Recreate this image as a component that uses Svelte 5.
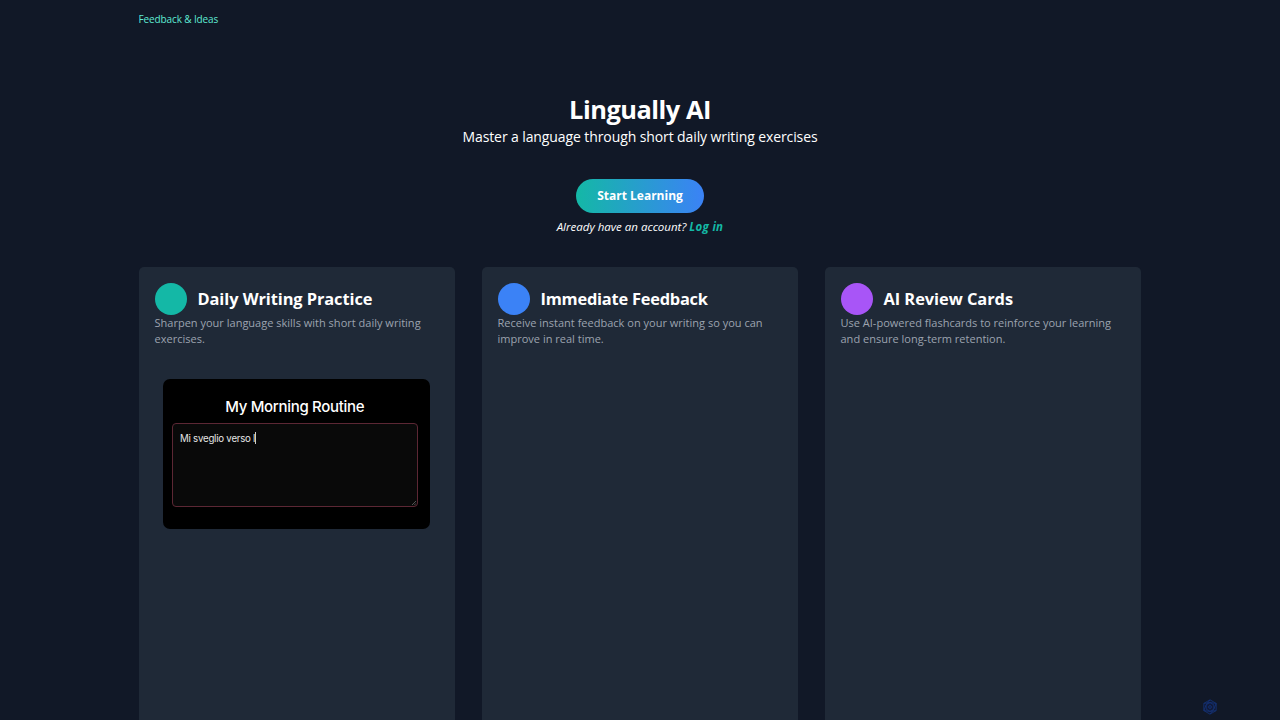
<script lang="ts">
  interface Feature {
    title: string;
    text: string;
    color: string;
    spacing: number;
    demo?: boolean;
  }

  const features: Feature[] = [
    {
      title: "Daily Writing Practice",
      text: "Sharpen your language skills with short daily writing exercises.",
      color: "#14b8a6",
      spacing: -0.08,
      demo: true,
    },
    {
      title: "Immediate Feedback",
      text: "Receive instant feedback on your writing so you can improve in real time.",
      color: "#3b82f6",
      spacing: -0.22,
    },
    {
      title: "AI Review Cards",
      text: "Use AI-powered flashcards to reinforce your learning and ensure long-term retention.",
      color: "#a855f7",
      spacing: -0.04,
    },
  ];
</script>

<div class="page">
  <nav><a class="feedback" href="#feedback">Feedback &amp; Ideas</a></nav>

  <header>
    <h1>Lingually AI</h1>
    <p class="tagline">Master a language through short daily writing exercises</p>
    <button type="button" class="start">Start Learning</button>
    <p class="login"><span>Already have an account?</span> <a href="#login">Log in</a></p>
  </header>

  <main>
    {#each features as feature}
      <section class="card">
        <div class="card-head">
          <span class="dot" style="background:{feature.color}"></span>
          <h2 style="letter-spacing:{feature.spacing}px">{feature.title}</h2>
        </div>
        <p class="card-text">{feature.text}</p>
        {#if feature.demo}
          <div class="demo">
            <h3>My Morning Routine</h3>
            <div class="editor">
              <span class="typed">Mi sveglio verso l</span><span class="caret"></span>
              <svg class="grip" viewBox="0 0 4 4"><path d="M0 4 4 0M2.4 4 4 2.4" /></svg>
            </div>
          </div>
        {/if}
      </section>
    {/each}
  </main>

  <svg class="badge" viewBox="0 0 16 16">
    <path d="M8 .8 14.2 4.4V11.6L8 15.2 1.8 11.6V4.4Z" />
    <path d="M8 3.6 11.8 5.8V10.2L8 12.4 4.2 10.2V5.8Z" />
    <path d="M8 .8 4.2 5.8 1.8 11.6M1.8 4.4 8 3.6 14.2 4.4M14.2 4.4 11.8 10.2 8 15.2M14.2 11.6 8 12.4 1.8 11.6" />
    <circle cx="8" cy="8" r="1.4" />
  </svg>
</div>

<style>
  :global(body) { background: #111827; overflow: hidden; }
  .page {
    height: 720px; display: flex; flex-direction: column; overflow: hidden; position: relative;
    background: #111827; color: #fff; font-family: "Open Sans", "Noto Sans", sans-serif;
  }
  h1, h2, h3, p { margin: 0; }
  a { text-decoration: none; }
  nav { height: 38px; padding-left: 138.5px; display: flex; align-items: center; flex: none; }
  .feedback { color: #5eead4; font-size: 10px; line-height: 16px; letter-spacing: -0.12px; }
  header {
    display: flex; flex-direction: column; align-items: center; flex: none;
    height: 228.5px; padding-top: 55px; box-sizing: border-box; white-space: nowrap;
  }
  h1 { font-size: 25.4px; font-weight: 700; line-height: 32px; letter-spacing: -0.48px; }
  .tagline { font-size: 14px; line-height: 24px; letter-spacing: -0.1px; }
  .start {
    width: 128px; height: 34px; margin-top: 30px; padding: 0; border: 0; border-radius: 17px;
    background: linear-gradient(to right, #14b8a6, #3b82f6); color: #fff;
    font: 700 12px/34px "Open Sans", sans-serif;
  }
  .login { font-size: 11.5px; line-height: 16px; margin-top: 6px; font-style: italic; }
  .login a { color: #14b8a6; font-weight: 700; letter-spacing: 0.3px; }
  main {
    display: grid; grid-template-columns: repeat(3, minmax(0, 1fr)); gap: 26.5px;
    padding: 0 139px 0 138.5px; flex: 1;
  }
  .card { background: #1f2937; border-radius: 5px 5px 0 0; padding: 16px; }
  .card-head { display: flex; align-items: center; gap: 11px; height: 32px; white-space: nowrap; }
  .dot { width: 32px; height: 32px; border-radius: 50%; flex: none; }
  h2 { font-size: 16.4px; font-weight: 700; line-height: 24px; }
  .card-text { color: #9ca3af; font-size: 11.03px; line-height: 16px; padding-right: 8px; }
  .demo {
    width: 267px; height: 150px; margin: 32px 0 0 8.5px; padding: 18px 12.5px 0 9px; box-sizing: border-box;
    background: #000; border-radius: 7px; font-family: Inter, sans-serif;
  }
  h3 {
    font-size: 15px; font-weight: 500; line-height: 20px; letter-spacing: -0.3px;
    text-align: center; margin-bottom: 6px;
  }
  .editor {
    position: relative; display: flex; height: 84px; padding: 8px 7px; box-sizing: border-box;
    border: 1px solid #5c2734; border-radius: 4px; background: #090909;
    color: #e5e5e5; font-size: 9.7px; line-height: 13px; letter-spacing: -0.24px;
  }
  .caret { width: 1px; height: 12px; background: #ccc; }
  .grip { position: absolute; right: 1px; bottom: 1px; width: 4px; height: 4px; fill: none; stroke: #888; stroke-width: .6; }
  .badge {
    position: absolute; left: 1202px; top: 699px; width: 16px; height: 16px;
    fill: #111f46; stroke: #153478; stroke-width: .8; fill-opacity: .4;
  }
</style>
